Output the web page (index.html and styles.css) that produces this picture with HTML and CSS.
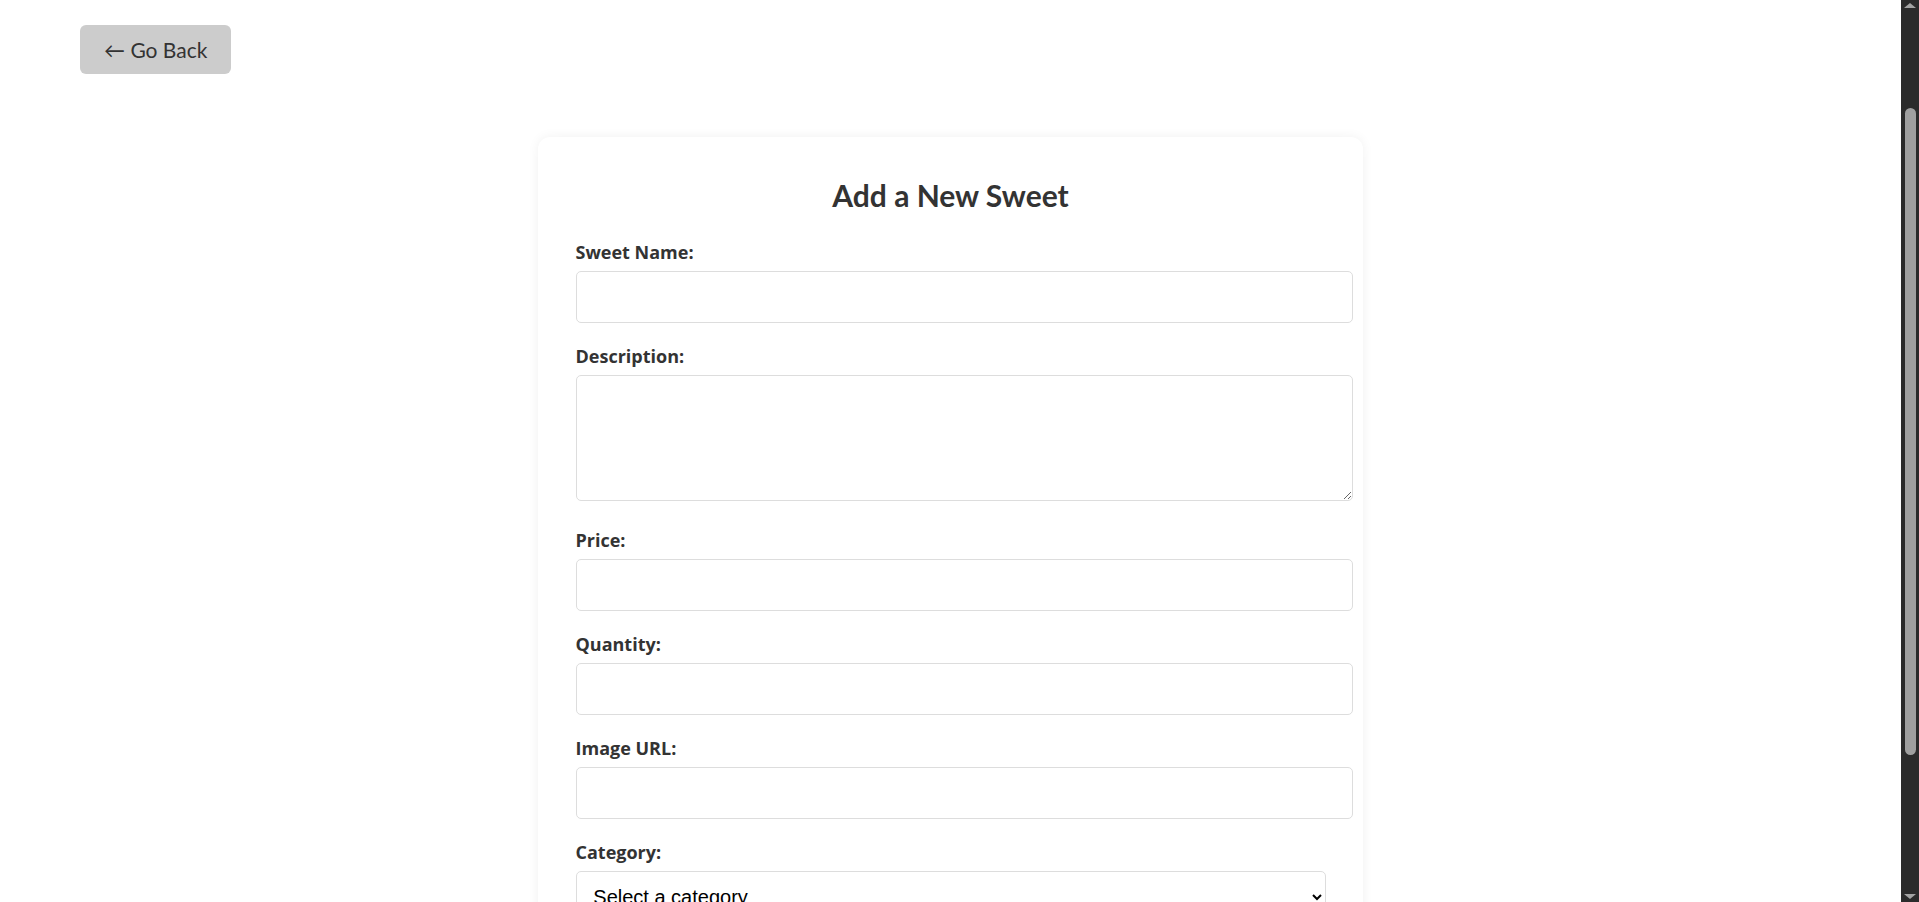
FILE: index.html
```html
<!DOCTYPE html>
<html lang="en">
<head>
<meta charset="utf-8">
<title>Add a New Sweet</title>
<link rel="stylesheet" href="styles.css">
</head>
<body>
<div class="page">
  <div class="top-bar">
    <button class="back-btn" type="button">&larr; Go Back</button>
  </div>
  <div class="card">
    <h2 class="card-title">Add a New Sweet</h2>
    <form class="sweet-form">
      <div class="form-group">
        <label class="field-label" for="name">Sweet Name:</label>
        <input class="field-input" id="name" type="text">
      </div>
      <div class="form-group">
        <label class="field-label" for="desc">Description:</label>
        <textarea class="field-input field-textarea" id="desc"></textarea>
      </div>
      <div class="form-group">
        <label class="field-label" for="price">Price:</label>
        <input class="field-input" id="price" type="number">
      </div>
      <div class="form-group">
        <label class="field-label" for="qty">Quantity:</label>
        <input class="field-input" id="qty" type="number">
      </div>
      <div class="form-group">
        <label class="field-label" for="img">Image URL:</label>
        <input class="field-input" id="img" type="text">
      </div>
      <div class="form-group">
        <label class="field-label" for="cat">Category:</label>
        <select class="field-select" id="cat">
          <option>Select a category</option>
          <option>Chocolate</option>
          <option>Candy</option>
          <option>Pastry</option>
        </select>
      </div>
      <button class="submit-btn" type="submit">Add Sweet</button>
    </form>
  </div>
</div>
<div class="fake-scrollbar" aria-hidden="true">
  <span class="sb-arrow sb-up"></span>
  <span class="sb-thumb"></span>
  <span class="sb-arrow sb-down"></span>
</div>
</body>
</html>
```

FILE: styles.css
```css
html, body {
  margin: 0;
  padding: 0;
  background: #ffffff;
}

body {
  font-family: Lato, "Noto Sans", sans-serif;
  color: #333333;
}

.page {
  padding: 25px 98px 60px 80px;
}

.top-bar {
  display: flex;
}

.back-btn {
  font-family: Lato, "Noto Sans", sans-serif;
  font-size: 21px;
  line-height: 25px;
  color: #333333;
  background: #cccccc;
  border: none;
  border-radius: 6px;
  padding: 12px 24px;
  cursor: pointer;
}

.card {
  max-width: 750px;
  margin: 63px auto 0;
  padding: 40px 37.5px;
  background: #ffffff;
  border-radius: 12px;
  box-shadow: 0 0 12px rgba(0, 0, 0, 0.06);
}

.card-title {
  margin: 0 0 28px;
  text-align: center;
  font-family: Lato, "Noto Sans", sans-serif;
  font-size: 30px;
  font-weight: 700;
  line-height: 36px;
  color: #333333;
}

.form-group {
  display: flex;
  flex-direction: column;
  align-items: flex-start;
  margin-bottom: 22px;
}

.field-label {
  display: block;
  font-family: "Open Sans", "Noto Sans", sans-serif;
  font-size: 18px;
  font-weight: 700;
  line-height: 22px;
  margin-bottom: 8px;
  color: #333333;
}

.field-input {
  display: block;
  box-sizing: content-box;
  width: 100%;
  height: 20px;
  padding: 15px 12.8px;
  margin: 0;
  border: 1px solid #dddddd;
  border-radius: 5px;
  font-family: Lato, "Noto Sans", sans-serif;
  font-size: 16px;
  line-height: 20px;
  color: #333333;
  background: #ffffff;
}

.field-textarea {
  height: 94px;
  margin-bottom: 6.4px;
  resize: vertical;
}

.field-select {
  display: block;
  box-sizing: border-box;
  width: 100%;
  height: 52px;
  padding: 0 12.8px;
  border: 1px solid #dddddd;
  border-radius: 5px;
  font-family: "Liberation Sans", Arial, sans-serif;
  font-size: 20px;
  color: #000000;
  background: #ffffff;
}

.submit-btn {
  display: block;
  width: 100%;
  padding: 14px;
  border: none;
  border-radius: 6px;
  background: #333333;
  color: #ffffff;
  font-family: Lato, "Noto Sans", sans-serif;
  font-size: 18px;
  font-weight: 700;
}

/* Browser scrollbar shown in the reference, drawn as an overlay */
.fake-scrollbar {
  position: fixed;
  top: 0;
  right: 0;
  width: 18px;
  height: 100vh;
  background: #2b2b2b;
  display: flex;
  flex-direction: column;
  align-items: center;
}

.sb-arrow {
  width: 0;
  height: 0;
  border-left: 6px solid transparent;
  border-right: 6px solid transparent;
}

.sb-up {
  margin-top: 3px;
  border-bottom: 5px solid #a3a3a3;
}

.sb-down {
  margin-top: auto;
  margin-bottom: 3px;
  border-top: 5px solid #a3a3a3;
}

.sb-thumb {
  width: 11px;
  height: 647px;
  margin-top: 100px;
  border-radius: 6px;
  background: #a0a0a0;
}
```
